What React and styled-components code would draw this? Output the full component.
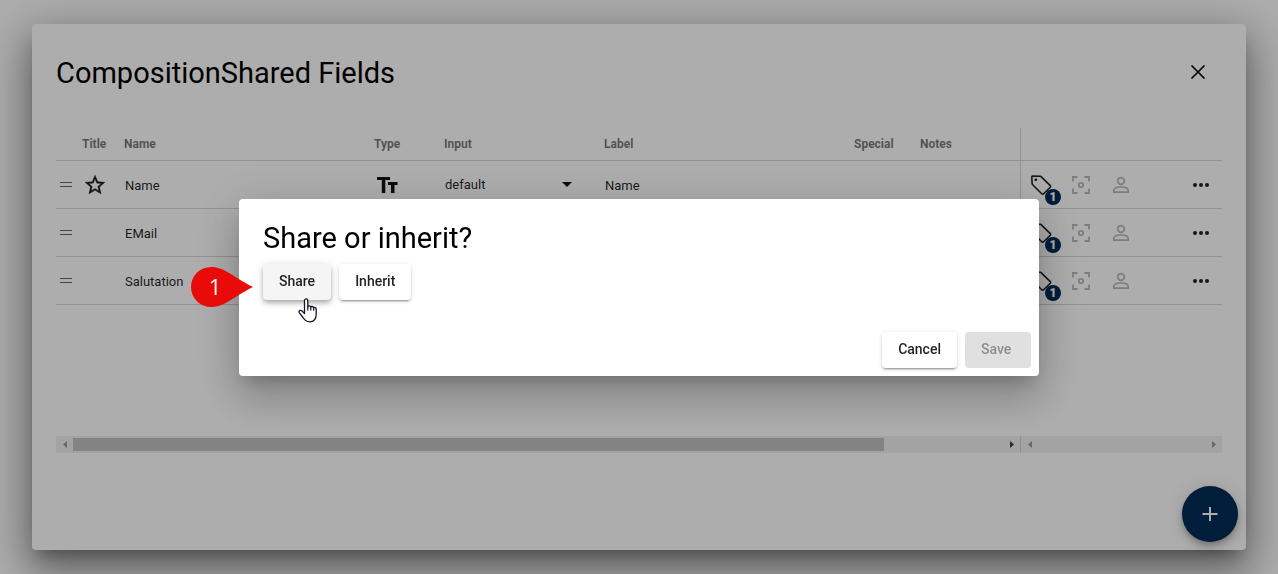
import React from "react";
import styled, { createGlobalStyle, css } from "styled-components";

const GlobalStyle = createGlobalStyle`
  *, *::before, *::after { box-sizing: border-box; }
  body {
    margin: 0;
    background: #fff;
    font-family: Roboto, "Liberation Sans", sans-serif;
    color: rgba(0, 0, 0, 0.87);
  }
  button, select { font-family: inherit; }
`;

const elevation = css`
  box-shadow:
    0 11px 15px -7px rgba(0, 0, 0, 0.2),
    0 24px 38px 3px rgba(0, 0, 0, 0.14),
    0 9px 46px 8px rgba(0, 0, 0, 0.12);
`;

const Page = styled.div`
  min-height: 100vh;
  padding: 24px 32px;
  display: flex;
  overflow: hidden;
`;

const Panel = styled.main`
  position: relative;
  flex: 1;
  min-width: 0;
  padding: 24px;
  border-radius: 4px;
  background: #fff;
  box-shadow:
    0 11px 15px -7px rgba(0, 0, 0, 0.32),
    0 24px 38px 3px rgba(0, 0, 0, 0.24),
    0 9px 46px 8px rgba(0, 0, 0, 0.22);
`;

const PanelHeader = styled.header`
  display: flex;
  align-items: flex-start;
  justify-content: space-between;
  height: 48px;
  margin-bottom: 32px;
`;

const Heading = styled.h1`
  margin: 0;
  font-size: 29px;
  line-height: ${(p) => p.$line}px;
  font-weight: 400;
  color: #000;
`;

const IconButton = styled.button`
  position: relative;
  display: flex;
  align-items: center;
  justify-content: center;
  width: ${(p) => p.$size || 40}px;
  height: ${(p) => p.$size || 40}px;
  padding: 0;
  border: 0;
  background: none;
  color: ${(p) => (p.$muted ? "rgba(0, 0, 0, 0.28)" : "rgba(0, 0, 0, 0.87)")};
`;

const DataGrid = styled.section`
  display: flex;
`;

const Pane = styled.div`
  display: flex;
  flex-direction: column;
  flex: ${(p) => (p.$pinned ? "0 0 202px" : "1")};
  min-width: 0;
`;

const Viewport = styled.div`
  height: 308px;
`;

const divider = css`
  border-left: 1px solid #d6d6d6;
`;

const Table = styled.table`
  width: 100%;
  table-layout: fixed;
  border-collapse: separate;
  border-spacing: 0;
  ${(p) => p.$pinned && divider}
`;

const Col = styled.col`
  width: ${(p) => (p.$w ? `${p.$w}px` : "auto")};
`;

const HeadCell = styled.th`
  height: 33px;
  padding: 0;
  border-bottom: 1px solid #d6d6d6;
  text-align: left;
  font-size: 12px;
  line-height: 16px;
  font-weight: 700;
  color: rgba(0, 0, 0, 0.54);
`;

const Cell = styled.td`
  height: 48px;
  padding: ${(p) => (p.$text ? 2 : 0)}px 0 0 ${(p) => (p.$flush ? 0 : 1)}px;
  border-bottom: 1px solid #d6d6d6;
  vertical-align: middle;
  font-size: 13px;
  line-height: 16px;
`;

const Glyph = styled.svg`
  display: block;
  overflow: visible;
`;

const Handle = styled.div`
  padding-left: 2px;
`;

const TypeMark = styled.div`
  padding-left: 1px;
`;

const SelectWrap = styled.label`
  display: flex;
  align-items: center;
  width: 127px;
`;

const InputSelect = styled.select`
  flex: 1;
  min-width: 0;
  height: 20px;
  padding: 0;
  border: 0;
  appearance: none;
  background: none;
  font-size: 13px;
  color: rgba(0, 0, 0, 0.87);
`;

const Actions = styled.div`
  display: flex;
  align-items: center;
`;

const Spacer = styled.span`
  width: ${(p) => p.$w}px;
`;

const Badge = styled.span`
  position: absolute;
  right: 0;
  bottom: 0;
  width: 16px;
  height: 16px;
  border-radius: 50%;
  background: #002b55;
  color: #fff;
  font-size: 12px;
  line-height: 16px;
  font-weight: 900;
  text-align: center;
`;

const ScrollTrack = styled.div`
  display: flex;
  align-items: center;
  height: 17px;
  background: #f1f1f1;
  ${(p) => p.$pinned && divider}
`;

const ScrollArrow = styled.span`
  flex: 0 0 17px;
  display: flex;
  justify-content: center;
  color: ${(p) => (p.$active ? "#404040" : "#9a9a9a")};
`;

const ScrollLane = styled.span`
  flex: 1;
  height: 13px;
`;

const ScrollThumb = styled.span`
  display: block;
  width: 87.2%;
  height: 100%;
  background: #c1c1c1;
`;

const AddButton = styled.button`
  position: absolute;
  right: 8px;
  bottom: 8px;
  display: flex;
  align-items: center;
  justify-content: center;
  width: 56px;
  height: 56px;
  padding: 0;
  border: 0;
  border-radius: 50%;
  background: #002b55;
  color: #fff;
  box-shadow:
    0 3px 5px -1px rgba(0, 0, 0, 0.2),
    0 6px 10px 0 rgba(0, 0, 0, 0.14),
    0 1px 18px 0 rgba(0, 0, 0, 0.12);
`;

const Backdrop = styled.div`
  position: fixed;
  inset: 0;
  display: flex;
  align-items: center;
  justify-content: center;
  background: rgba(0, 0, 0, 0.32);
`;

const Dialog = styled.div`
  width: 800px;
  max-width: 80vw;
  border-radius: 4px;
  background: #fff;
  ${elevation}
`;

const DialogBody = styled.div`
  padding: 24px 24px 0;
`;

const Choices = styled.div`
  display: flex;
  gap: 8px;
  margin-top: 11px;
`;

const DialogFooter = styled.footer`
  display: flex;
  justify-content: flex-end;
  gap: 8px;
  padding: 32px 8px 8px;
`;

const Anchor = styled.div`
  position: relative;
`;

const Button = styled.button`
  height: 36px;
  min-width: 66px;
  padding: 0 16px 2px;
  border: 0;
  border-radius: 4px;
  background: ${(p) => (p.$hovered ? "#f5f5f5" : "#fff")};
  color: rgba(0, 0, 0, 0.87);
  font-size: 14px;
  line-height: 34px;
  font-weight: 500;
  text-align: left;
  box-shadow: ${(p) =>
    p.$hovered
      ? "0 2px 4px -1px rgba(0,0,0,.2), 0 4px 5px 0 rgba(0,0,0,.14), 0 1px 10px 0 rgba(0,0,0,.12)"
      : "0 3px 1px -2px rgba(0,0,0,.2), 0 2px 2px 0 rgba(0,0,0,.14), 0 1px 5px 0 rgba(0,0,0,.12)"};

  &:disabled {
    background: #e0e0e0;
    color: rgba(0, 0, 0, 0.38);
    box-shadow: none;
  }
`;

const Callout = styled.span`
  position: absolute;
  top: 3px;
  left: -72px;
  width: 62px;
  height: 40px;
  color: #fff;
  font-family: "Open Sans", "Noto Sans", sans-serif;
  font-size: 22px;
  line-height: 38px;
  font-weight: 500;
`;

const CalloutShape = styled.svg`
  position: absolute;
  inset: 0;
`;

const CalloutText = styled.span`
  position: relative;
  display: block;
  width: 48px;
  text-align: center;
`;

const Pointer = styled.svg`
  position: absolute;
  top: 34px;
  left: 35px;
`;

const CloseIcon = () => (
  <Glyph width="24" height="24" viewBox="0 0 24 24" fill="none" stroke="#000" strokeWidth="1.700">
    <path d="M5.500 5.500 18.500 18.500M18.500 5.500 5.500 18.500" />
  </Glyph>
);

const HandleIcon = () => (
  <Glyph width="14" height="8" viewBox="0 0 14 8" fill="rgba(0,0,0,.6)">
    <path d="M1 1h12v1H1zM1 5h12v1H1z" />
  </Glyph>
);

const StarIcon = () => (
  <Glyph width="24" height="24" viewBox="0 0 24 24" fill="currentColor" stroke="currentColor" strokeWidth=".3">
    <path d="M22 9.24l-7.19-.62L12 2 9.19 8.63 2 9.24l5.46 4.73L5.82 21 12 17.27 18.18 21l-1.63-7.03L22 9.24zM12 15.4l-3.76 2.27 1-4.28-3.32-2.88 4.38-.38L12 6.1l1.71 4.04 4.38.38-3.32 2.88 1 4.28L12 15.4z" />
  </Glyph>
);

const TypeIcon = () => (
  <Glyph width="22" height="18" viewBox="0 0 22 18" fill="#111">
    <path d="M1 1h13v3H9.300v13H5.800V4H1zM12 6h9.500v3h-3v8h-3.500V9h-3z" />
  </Glyph>
);

const TagIcon = () => (
  <Glyph width="24" height="24" viewBox="0 0 24 24" fill="none" stroke="currentColor" strokeWidth="1.600" strokeLinejoin="round">
    <path d="M2.800 3.800Q2.800 3 3.600 3L11.500 3.200 21.300 12.600Q22 13.400 21.300 14.200L14.600 20.800Q13.600 21.600 12.700 20.700L3.700 11.800Q3.100 11.200 3.100 10.500Z" />
    <circle cx="6.800" cy="6.800" r="1.400" fill="currentColor" stroke="none" />
  </Glyph>
);

const FocusIcon = () => (
  <Glyph width="24" height="24" viewBox="0 0 24 24" fill="none" stroke="currentColor" strokeWidth="1.800">
    <path d="M4 8.500V4h4.500M15.500 4H20v4.500M20 15.500V20h-4.500M8.500 20H4v-4.500" />
    <circle cx="12" cy="12" r="2.200" />
  </Glyph>
);

const PersonIcon = () => (
  <Glyph width="24" height="24" viewBox="0 0 24 24" fill="none" stroke="currentColor" strokeWidth="1.700">
    <circle cx="12" cy="8" r="3.300" />
    <path d="M4.800 19.200V17.500C4.800 15 8.500 14 12 14s7.200 1 7.200 3.500v1.700z" />
  </Glyph>
);

const MoreIcon = () => (
  <Glyph width="24" height="24" viewBox="0 0 24 24" fill="currentColor">
    <circle cx="6" cy="12" r="2" />
    <circle cx="12" cy="12" r="2" />
    <circle cx="18" cy="12" r="2" />
  </Glyph>
);

const CaretDown = () => (
  <Glyph width="10" height="5" viewBox="0 0 10 5" fill="#111">
    <path d="M0 0h10L5 5z" />
  </Glyph>
);

const PlusIcon = () => (
  <Glyph width="24" height="24" viewBox="0 0 24 24" stroke="currentColor" strokeWidth="2">
    <path d="M12 5v14M4.500 12h15" />
  </Glyph>
);

const Triangle = ({ right }) => (
  <Glyph width="4" height="7" viewBox="0 0 4 7" fill="currentColor">
    <path d={right ? "M0 0v7l4-3.500z" : "M4 0v7L0 3.500z"} />
  </Glyph>
);

const columns = [
  { label: "", width: 26 },
  { label: "Title", width: 42 },
  { label: "Name", width: 250 },
  { label: "Type", width: 70 },
  { label: "Input", width: 160 },
  { label: "Label", width: 250 },
  { label: "Special", width: 66 },
  { label: "Notes" },
];

const fields = [
  { name: "Name", input: "default", label: "Name", title: true },
  { name: "EMail", input: "default", label: "EMail" },
  { name: "Salutation", input: "default", label: "Salutation" },
];

function FieldRow({ field }) {
  return (
    <tr>
      <Cell><Handle><HandleIcon /></Handle></Cell>
      <Cell>{field.title && <StarIcon />}</Cell>
      <Cell $text>{field.name}</Cell>
      <Cell><TypeMark><TypeIcon /></TypeMark></Cell>
      <Cell>
        <SelectWrap>
          <InputSelect aria-label={`Input for ${field.name}`} defaultValue={field.input}>
            <option>{field.input}</option>
          </InputSelect>
          <CaretDown />
        </SelectWrap>
      </Cell>
      <Cell $text>{field.label}</Cell>
      <Cell />
      <Cell />
    </tr>
  );
}

function ActionRow() {
  return (
    <tr>
      <Cell $flush>
        <Actions>
          <IconButton aria-label="Tags"><TagIcon /><Badge>1</Badge></IconButton>
          <IconButton aria-label="Image settings" $muted><FocusIcon /></IconButton>
          <IconButton aria-label="Permissions" $muted><PersonIcon /></IconButton>
          <Spacer $w={40} />
          <IconButton aria-label="More"><MoreIcon /></IconButton>
        </Actions>
      </Cell>
    </tr>
  );
}

export default function App() {
  return (
    <>
      <GlobalStyle />
      <Page>
        <Panel>
          <PanelHeader>
            <Heading $line={50}>CompositionShared Fields</Heading>
            <IconButton $size={48} aria-label="Close"><CloseIcon /></IconButton>
          </PanelHeader>
          <DataGrid>
            <Pane>
              <Viewport>
                <Table>
                  <colgroup>
                    {columns.map((c, i) => <Col key={i} $w={c.width} />)}
                  </colgroup>
                  <thead>
                    <tr>{columns.map((c, i) => <HeadCell key={i}>{c.label}</HeadCell>)}</tr>
                  </thead>
                  <tbody>
                    {fields.map((f) => <FieldRow key={f.name} field={f} />)}
                  </tbody>
                </Table>
              </Viewport>
              <ScrollTrack>
                <ScrollArrow><Triangle /></ScrollArrow>
                <ScrollLane><ScrollThumb /></ScrollLane>
                <ScrollArrow $active><Triangle right /></ScrollArrow>
              </ScrollTrack>
            </Pane>
            <Pane $pinned>
              <Viewport>
                <Table $pinned>
                  <thead><tr><HeadCell /></tr></thead>
                  <tbody>
                    {fields.map((f) => <ActionRow key={f.name} />)}
                  </tbody>
                </Table>
              </Viewport>
              <ScrollTrack $pinned>
                <ScrollArrow><Triangle /></ScrollArrow>
                <ScrollLane />
                <ScrollArrow><Triangle right /></ScrollArrow>
              </ScrollTrack>
            </Pane>
          </DataGrid>
          <AddButton aria-label="Add field"><PlusIcon /></AddButton>
        </Panel>
      </Page>
      <Backdrop>
        <Dialog role="dialog" aria-modal="true" aria-labelledby="dialog-title">
          <DialogBody>
            <Heading as="h2" id="dialog-title" $line={30}>Share or inherit?</Heading>
            <Choices>
              <Anchor>
                <Button $hovered>Share</Button>
                <Callout>
                  <CalloutShape width="62" height="40" viewBox="0 0 62 40">
                    <path d="M20 0C34 0 42 10 62 20 42 30 34 40 20 40A20 20 0 0 1 20 0z" fill="#e90a0a" />
                  </CalloutShape>
                  <CalloutText>1</CalloutText>
                </Callout>
                <Pointer width="20" height="25" viewBox="0 0 20 25">
                  <path
                    d="M6.500 15.500V2.600C6.500.4 9.800.4 9.800 2.600V9C10 7.500 12.600 7.600 12.800 9.300 13.200 8 15.400 8.200 15.600 10 16.200 9 18.200 9.400 18.200 11.300V16C18.200 20.500 16 23.800 11.800 23.800 8 23.800 6.500 22 5 19.500L1.300 14.600C.4 13 2.400 11.600 3.800 12.800Z"
                    fill="#fff" stroke="#15152a" strokeWidth="1.300" strokeLinejoin="round"
                  />
                  <path d="M9.800 8.500V12.500M12.800 9.300V12.500M15.600 10V12.800" stroke="#15152a" strokeWidth="1.200" />
                </Pointer>
              </Anchor>
              <Button>Inherit</Button>
            </Choices>
          </DialogBody>
          <DialogFooter>
            <Button>Cancel</Button>
            <Button disabled>Save</Button>
          </DialogFooter>
        </Dialog>
      </Backdrop>
    </>
  );
}
